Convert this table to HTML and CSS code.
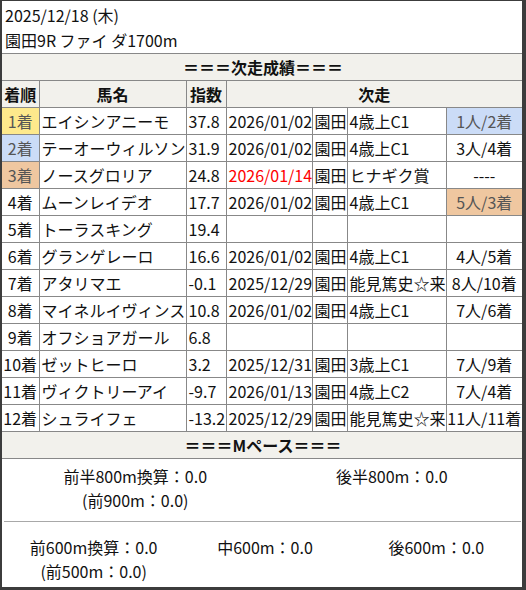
FILE: index.html
```html
<!DOCTYPE html>
<html lang="ja">
<head>
<meta charset="utf-8">
<link rel="stylesheet" href="styles.css">
</head>
<body>
<div class="card">
  <div class="head">
    <div>2025/12/18 (木)</div>
    <div>園田9R ファイ ダ1700m</div>
  </div>
  <table class="res">
    <colgroup>
      <col class="c1"><col class="c2"><col class="c3"><col class="c4"><col class="c5"><col class="c6"><col class="c7">
    </colgroup>
    <tr><td class="bar" colspan="7">＝＝＝次走成績＝＝＝</td></tr>
    <tr class="th"><td class="ctr">着順</td><td class="ctr">馬名</td><td class="ctr">指数</td><td class="ctr" colspan="4">次走</td></tr>
    <tr><td class="pos yel">1着</td><td>エイシンアニーモ</td><td>37.8</td><td>2026/01/02</td><td>園田</td><td>4歳上C1</td><td class="ctr blu">1人/2着</td></tr>
    <tr><td class="pos blu">2着</td><td>テーオーウィルソン</td><td>31.9</td><td>2026/01/02</td><td>園田</td><td>4歳上C1</td><td class="ctr">3人/4着</td></tr>
    <tr><td class="pos ora">3着</td><td>ノースグロリア</td><td>24.8</td><td class="red">2026/01/14</td><td>園田</td><td>ヒナギク賞</td><td class="ctr">----</td></tr>
    <tr><td class="pos">4着</td><td>ムーンレイデオ</td><td>17.7</td><td>2026/01/02</td><td>園田</td><td>4歳上C1</td><td class="ctr ora">5人/3着</td></tr>
    <tr><td class="pos">5着</td><td>トーラスキング</td><td>19.4</td><td></td><td></td><td></td><td></td></tr>
    <tr><td class="pos">6着</td><td>グランゲレーロ</td><td>16.6</td><td>2026/01/02</td><td>園田</td><td>4歳上C1</td><td class="ctr">4人/5着</td></tr>
    <tr><td class="pos">7着</td><td>アタリマエ</td><td>-0.1</td><td>2025/12/29</td><td>園田</td><td>能見篤史☆来</td><td class="ctr">8人/10着</td></tr>
    <tr><td class="pos">8着</td><td>マイネルイヴィンス</td><td>10.8</td><td>2026/01/02</td><td>園田</td><td>4歳上C1</td><td class="ctr">7人/6着</td></tr>
    <tr><td class="pos">9着</td><td>オフショアガール</td><td>6.8</td><td></td><td></td><td></td><td></td></tr>
    <tr><td class="pos">10着</td><td>ゼットヒーロ</td><td>3.2</td><td>2025/12/31</td><td>園田</td><td>3歳上C1</td><td class="ctr">7人/9着</td></tr>
    <tr><td class="pos">11着</td><td>ヴィクトリーアイ</td><td>-9.7</td><td>2026/01/13</td><td>園田</td><td>4歳上C2</td><td class="ctr">7人/4着</td></tr>
    <tr><td class="pos">12着</td><td>シュライフェ</td><td>-13.2</td><td>2025/12/29</td><td>園田</td><td>能見篤史☆来</td><td class="ctr">11人/11着</td></tr>
    <tr><td class="bar" colspan="7">＝＝＝Mペース＝＝＝</td></tr>
  </table>
  <div class="pace two">
    <div class="item"><div>前半800m換算：0.0</div><div>(前900m：0.0)</div></div>
    <div class="item"><div>後半800m：0.0</div></div>
  </div>
  <div class="pace three">
    <div class="item"><div>前600m換算：0.0</div><div>(前500m：0.0)</div></div>
    <div class="item"><div>中600m：0.0</div></div>
    <div class="item"><div>後600m：0.0</div></div>
  </div>
</div>
</body>
</html>
```
FILE: styles.css
```css
html, body {
  margin: 0;
  padding: 0;
}
body {
  background: #3c3c3c;
  padding: 1px 4px 3px 2px;
  width: 520px;
  font-family: "Noto Sans CJK JP", "Noto Sans", sans-serif;
  font-size: 16px;
  color: #111;
}
.card {
  background: #fff;
  width: 520px;
  height: 586px;
}
.head {
  padding: 2px 3px 0;
  height: 50px;
  line-height: 25px;
}
.res {
  width: 520px;
  border-collapse: collapse;
  table-layout: fixed;
  border-style: hidden;
  border-top: 1px solid #888;
  border-bottom: 1px solid #888;
}
.c1 { width: 37px; }
.c2 { width: 147px; }
.c3 { width: 40px; }
.c4 { width: 86px; }
.c5 { width: 35px; }
.c6 { width: 99px; }
.c7 { width: 76px; }
.res td {
  border: 1px solid #888;
  height: 26px;
  line-height: 26px;
  padding: 0 0 0 2px;
  white-space: nowrap;
  overflow: visible;
}
.res td.bar {
  background: #f2f1ec;
  text-align: center;
  font-weight: bold;
}
.res tr.th td {
  background: #f2f1ec;
  font-weight: bold;
}
.res td.ctr { text-align: center; padding: 0; }
.res td.pos { text-align: center; padding: 0; }
.yel { background: #fee98c; color: #555; }
.blu { background: #cbdcf7; color: #555; }
.ora { background: #efc7a0; color: #555; }
.red { color: #f00; }
.pace {
  display: grid;
  line-height: 24px;
  text-align: center;
}
.pace.two {
  grid-template-columns: 1fr 1fr;
  padding: 5px 1px 9px 3px;
  border-bottom: 1px solid #a8a8a8;
  margin: 0 1px 0 2px;
}
.pace.three {
  grid-template-columns: 1fr 1fr 1fr;
  padding: 13px 0 0 6px;
}
```
